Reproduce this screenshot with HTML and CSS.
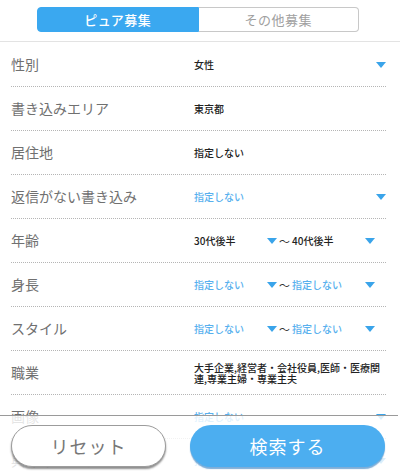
FILE: index.html
```html
<!DOCTYPE html>
<html lang="ja">
<head>
<meta charset="utf-8">
<link rel="stylesheet" href="styles.css">
</head>
<body>
<div class="page">
  <div class="header">
    <div class="tabs">
      <div class="tab active">ピュア募集</div>
      <div class="tab">その他募集</div>
    </div>
  </div>
  <div class="list">
    <div class="row">
      <div class="label">性別</div>
      <div class="value select"><span class="txt">女性</span><span class="arrow"></span></div>
    </div>
    <div class="row">
      <div class="label">書き込みエリア</div>
      <div class="value"><span class="txt">東京都</span></div>
    </div>
    <div class="row">
      <div class="label">居住地</div>
      <div class="value"><span class="txt">指定しない</span></div>
    </div>
    <div class="row">
      <div class="label">返信がない書き込み</div>
      <div class="value select"><span class="txt blue">指定しない</span><span class="arrow"></span></div>
    </div>
    <div class="row">
      <div class="label">年齢</div>
      <div class="value range">
        <div class="sel"><span class="txt">30代後半</span><span class="arrow"></span></div>
        <span class="tilde">～</span>
        <div class="sel"><span class="txt">40代後半</span><span class="arrow"></span></div>
      </div>
    </div>
    <div class="row">
      <div class="label">身長</div>
      <div class="value range">
        <div class="sel"><span class="txt blue">指定しない</span><span class="arrow"></span></div>
        <span class="tilde">～</span>
        <div class="sel"><span class="txt blue">指定しない</span><span class="arrow"></span></div>
      </div>
    </div>
    <div class="row">
      <div class="label">スタイル</div>
      <div class="value range">
        <div class="sel"><span class="txt blue">指定しない</span><span class="arrow"></span></div>
        <span class="tilde">～</span>
        <div class="sel"><span class="txt blue">指定しない</span><span class="arrow"></span></div>
      </div>
    </div>
    <div class="row">
      <div class="label">職業</div>
      <div class="value"><span class="txt multi">大手企業,経営者・会社役員,医師・医療関連,専業主婦・専業主夫</span></div>
    </div>
    <div class="row">
      <div class="label">画像</div>
      <div class="value select"><span class="txt blue">指定しない</span><span class="arrow"></span></div>
    </div>
    <div class="row">
      <div class="label">興味あること</div>
      <div class="value select"><span class="txt blue">指定しない</span><span class="arrow"></span></div>
    </div>
  </div>
  <div class="footer">
    <button class="btn reset">リセット</button>
    <button class="btn search">検索する</button>
  </div>
</div>
</body>
</html>
```
FILE: styles.css
```css
html, body {
  margin: 0;
  padding: 0;
  background: #fff;
}
body {
  width: 400px;
  height: 475px;
  overflow: hidden;
  font-family: "Noto Sans CJK JP", "Noto Sans", sans-serif;
}
.page {
  position: relative;
  width: 400px;
  height: 475px;
  overflow: hidden;
}
.header {
  height: 42px;
  box-sizing: border-box;
  padding-top: 7px;
  display: flex;
  justify-content: center;
  border-bottom: 1px solid #e3e3e3;
}
.tabs {
  display: flex;
  width: 322px;
  height: 25px;
  margin-left: -4px;
}
.tab {
  flex: 1;
  display: flex;
  align-items: center;
  justify-content: center;
  font-size: 13px;
  color: #a0a0a0;
  border: 1px solid #c8c8c8;
  border-left: none;
  border-radius: 0 4px 4px 0;
  box-sizing: border-box;
  letter-spacing: 0.5px;
}
.tab.active {
  background: #3aa8f0;
  color: #fff;
  border: 1px solid #3aa8f0;
  border-radius: 4px 0 0 4px;
  font-weight: 500;
}
.list {
  margin: 1px 14px 0 11px;
}
.row {
  display: flex;
  align-items: center;
  height: 44px;
  box-sizing: border-box;
  border-bottom: 1px dotted #b5b5b5;
}
.label {
  width: 183px;
  flex: none;
  font-size: 14px;
  color: #707070;
  padding-bottom: 2px;
}
.value {
  flex: 1;
  display: flex;
  align-items: center;
  min-width: 0;
}
.txt {
  font-size: 10px;
  font-weight: 500;
  color: #222;
}
.txt.blue {
  color: #58b0ee;
}
.txt.multi {
  line-height: 11px;
  display: block;
  padding-top: 1px;
}
.select {
  justify-content: space-between;
}
.arrow {
  width: 0;
  height: 0;
  border-left: 5px solid transparent;
  border-right: 5px solid transparent;
  border-top: 6px solid #3aa4ea;
  flex: none;
}
.sel {
  width: 83px;
  display: flex;
  justify-content: space-between;
  align-items: center;
}
.tilde {
  width: 15px;
  text-align: center;
  font-size: 11px;
  color: #333;
}
.footer {
  position: absolute;
  left: 0;
  top: 415px;
  width: 398px;
  height: 60px;
  box-sizing: border-box;
  border-top: 1px solid #9a9a9a;
  background: rgba(255, 255, 255, 0.82);
  display: flex;
  align-items: flex-start;
  padding: 9px 0 0 11px;
  gap: 24px;
}
.btn {
  font-family: "Noto Sans CJK JP", "Noto Sans", sans-serif;
  height: 42px;
  border-radius: 21px;
  font-size: 18px;
  padding: 0;
  margin: 0;
  letter-spacing: 1px;
}
.reset {
  width: 155px;
  background: #fff;
  color: #777;
  border: 1px solid #9c9c9c;
  box-shadow: 0 2px 2px rgba(0, 0, 0, 0.45);
}
.search {
  width: 195px;
  background: #4caef0;
  color: #fff;
  border: none;
  box-shadow: 0 2px 1px rgba(40, 120, 190, 0.6);
}
```
